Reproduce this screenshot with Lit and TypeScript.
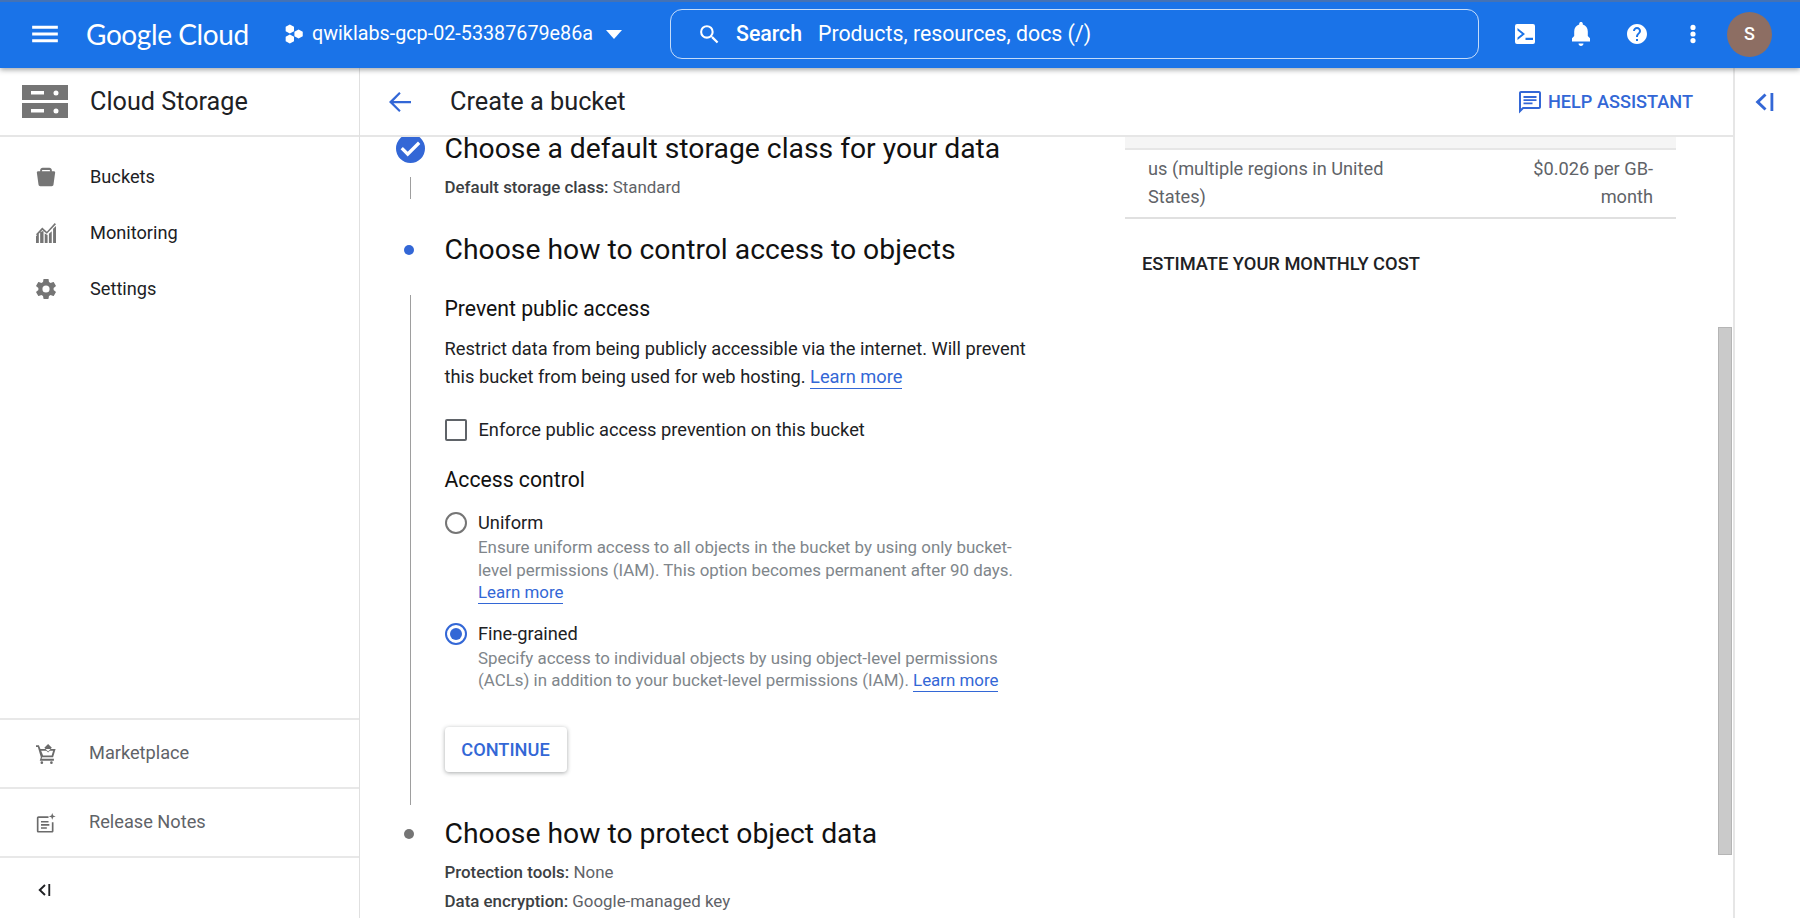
import { LitElement, css, html, svg } from "lit";
import { customElement } from "lit/decorators.js";

const icon = (size: number, body: unknown, cls = "") => html`
  <svg class=${cls} width=${size} height=${size} viewBox="0 0 24 24" fill="currentColor">${body}</svg>
`;

const menuIcon = svg`<path d="M1 5h22v2.400H1zM1 10.800h22v2.400H1zM1 16.600h22V19H1z" />`;
const searchIcon = svg`<path d="M15.500 14h-.790l-.280-.270A6.470 6.470 0 0 0 16 9.500 6.500 6.500 0 1 0 9.500 16c1.610 0 3.090-.590 4.230-1.570l.270.280v.790l5 4.990L20.490 19l-4.990-5zm-6 0C7.010 14 5 11.990 5 9.500S7.010 5 9.500 5 14 7.010 14 9.500 11.990 14 9.500 14z" />`;
const terminalIcon = svg`<path fill-rule="evenodd" d="M4 2h16a2 2 0 0 1 2 2v16a2 2 0 0 1-2 2H4a2 2 0 0 1-2-2V4a2 2 0 0 1 2-2zM4.500 8.500l4.500 3.500-4.500 3.500v2.400l7.500-5.900-7.500-5.900zM12.500 15.700v2.200H20v-2.200z" />`;
const bellIcon = svg`<path d="M12 24c1.400 0 2.500-1.100 2.500-2.500h-5C9.500 22.900 10.600 24 12 24zm9-6.500v-1.200l-2.200-2.300V9.500c0-3.400-1.900-6.200-5-7V1.700C13.800.700 13 0 12 0s-1.800.700-1.800 1.700v.8c-3.100.8-5 3.600-5 7V14L3 16.300v1.200v2h18z" />`;
const helpIcon = svg`<path d="M12 2C6.480 2 2 6.480 2 12s4.480 10 10 10 10-4.480 10-10S17.520 2 12 2zm1 17h-2v-2h2v2zm2.070-7.750-.9.920C13.450 12.900 13 13.500 13 15h-2v-.500c0-1.100.450-2.100 1.170-2.830l1.240-1.260c.370-.360.590-.860.590-1.410 0-1.100-.900-2-2-2s-2 .900-2 2H8c0-2.210 1.790-4 4-4s4 1.790 4 4c0 .880-.360 1.680-.930 2.250z" />`;
const moreIcon = svg`<path d="M12 8a2.600 2.600 0 1 0 0-5.200A2.600 2.600 0 0 0 12 8zm0 1.400a2.600 2.600 0 1 0 0 5.200 2.600 2.600 0 0 0 0-5.200zm0 6.600a2.600 2.600 0 1 0 0 5.200 2.600 2.600 0 0 0 0-5.200z" />`;
const hexIcon = svg`<path d="M7 .500l5 2.800v5.400l-5 2.800-5-2.800V3.300zM7 12.500l5 2.800v5.400l-5 2.800-5-2.800v-5.400zM17.500 6.500l5 2.800v5.400l-5 2.800-5-2.800V9.300z" />`;
const backIcon = svg`<path d="M23 11v2.200H5.500l7.200 7.300-1.500 1.500L1 12 11.200 2l1.500 1.500L5.500 11z" />`;
const chatIcon = svg`<path fill-rule="evenodd" d="M3 1h18c1.100 0 2 .900 2 2v14c0 1.100-.900 2-2 2H5.500L1 23.500V3c0-1.100.900-2 2-2zm0 2v15.500L4.800 17H21V3zM5.500 6h13v1.900h-13zM5.500 9.200h13v1.900h-13zM5.500 12.400h9v1.900h-9z" />`;
const collapseIcon = svg`<path d="M12.500 3.500l2 2L7.800 12l6.700 6.500-2 2L3.500 12zM18.500 3h2.800v18h-2.800z" />`;
const bucketIcon = svg`<path fill-rule="evenodd" d="M8 1h8c1.600 0 3 1.400 3 3v1h2.500c.800 0 1.500.700 1.500 1.500L21 21c-.100 1.100-1 2-2.200 2H5.200C4 23 3.100 22.100 3 21L1 6.500C1 5.700 1.700 5 2.500 5H5V4c0-1.600 1.400-3 3-3zm.400 2.500C7.600 3.500 7 4.100 7 4.900V5h10v-.100c0-.800-.600-1.400-1.400-1.400z" />`;
const chartIcon = svg`<path d="M0 24v-8l3.400-3.600V24zM5 24V11l3.400-1.500 .600.500V24zM10.500 24V12.500l3.400 2V24zM15.500 24V13l3.400-3V24zM20.500 24V7L24 3.500V24zM0 13.500l7.500-8 5.500 5L22.500 0 24 1.500 13 13 7.600 8.300 1.500 15z" />`;
const gearIcon = svg`<path d="M21.100 13.200c.050-.400.100-.800.100-1.200s-.050-.800-.100-1.200l2.600-2c.200-.200.300-.500.150-.750l-2.450-4.250c-.150-.250-.450-.350-.750-.250l-3.050 1.250c-.650-.500-1.300-.900-2.050-1.200L15.100.300C15.050 0 14.800 0 14.500 0h-5c-.300 0-.550.200-.600.500L8.450 3.600c-.750.300-1.450.700-2.050 1.200L3.350 3.550c-.300-.100-.600 0-.750.250L.150 8.050c-.150.250-.100.550.150.750l2.600 2c-.050.400-.100.800-.100 1.200s.050.800.100 1.200l-2.600 2c-.200.200-.300.500-.150.750l2.450 4.250c.150.250.450.350.750.250l3.050-1.250c.650.500 1.300.900 2.050 1.200l.450 3.100c.050.300.300.500.600.500h5c.300 0 .550-.200.600-.500l.450-3.100c.750-.300 1.450-.700 2.050-1.200l3.050 1.250c.300.100.600 0 .750-.250l2.450-4.250c.150-.250.100-.550-.150-.750zM12 16.300a4.300 4.300 0 1 1 0-8.600 4.300 4.300 0 0 1 0 8.600z" />`;
const cartIcon = svg`<path fill-rule="evenodd" d="M14.500 0l4.500 4.500-4.500 4.500L10 4.500zM0 1.500h3.500L5.300 6h18.200l-3 10H7.400l-.700 1.800h14.800V20H4.500l1.300-4.200L2.200 3.700H0zM6.200 8.200l2.300 5.600h10.300l1.700-5.600h-4l-2 2-2-2zM7 20.800a1.600 1.600 0 1 1 0 3.200 1.600 1.600 0 0 1 0-3.200zM18.500 20.800a1.600 1.600 0 1 1 0 3.200 1.600 1.600 0 0 1 0-3.200z" />`;
const notesIcon = svg`<path fill-rule="evenodd" d="M3 4h12v2H3v15.500h16V11h2v10.500c0 1.100-.900 2-2 2H3c-1.100 0-2-.900-2-2V6c0-1.100.900-2 2-2zM6 9.500h9v2H6zM6 13.300h10v2H6zM6 17h7v2H6zM19.500 0l1.100 3 3 1.100-3 1.100-1.100 3-1.100-3-3-1.100 3-1.100z" />`;
const checkIcon = svg`<path d="M12 0a12 12 0 1 0 0 24 12 12 0 0 0 0-24zm-2.300 18.600-5.900-6 1.900-1.900 4 4 8.500-8.500 1.900 2z" />`;

@customElement("app-root")
export class AppRoot extends LitElement {
  static override styles = css`
    :host {
      display: flex;
      flex-direction: column;
      width: 1800px;
      height: 918px;
      overflow: hidden;
      background: #fff;
      color: #202124;
      font-family: Roboto, "Liberation Sans", sans-serif;
      font-size: 18.25px;
      line-height: 28.4px;
    }

    a {
      color: #3367d6;
      text-decoration: none;
      border-bottom: 1px solid #3367d6;
      padding-bottom: 1px;
    }

    /* top bar */
    .topbar {
      position: relative;
      z-index: 2;
      flex: none;
      height: 68px;
      box-sizing: border-box;
      padding-bottom: 2px;
      border-top: 2px solid #4472b5;
      display: flex;
      align-items: center;
      background: #1a73e8;
      color: #fff;
      box-shadow: 0 2px 5px rgba(60, 64, 67, 0.45);
    }

    .menu {
      margin: 0 0 0 31px;
    }

    .logo {
      margin-left: 27px;
      width: 198px;
      font-family: Lato, sans-serif;
      font-size: 28px;
      letter-spacing: -0.4px;
      white-space: nowrap;
    }

    .hex {
      width: 20px;
      height: 20px;
    }

    .project {
      margin-left: 8px;
      width: 294px;
      font-size: 19.75px;
      white-space: nowrap;
    }

    .caret {
      width: 0;
      height: 0;
      border: 8px solid transparent;
      border-top: 9px solid #fff;
      border-bottom: 0;
    }

    .search {
      margin-left: 48px;
      width: 809px;
      height: 50px;
      box-sizing: border-box;
      border: 1px solid rgba(255, 255, 255, 0.75);
      border-radius: 12px;
      display: flex;
      align-items: center;
      padding-left: 26px;
      font-size: 21.3px;
    }

    .search b {
      margin-left: 14px;
      width: 82px;
      font-weight: 500;
    }

    .actions {
      margin-left: 34px;
      display: flex;
      align-items: center;
      gap: 32px;
    }

    .avatar {
      margin-left: 22px;
      width: 45px;
      height: 45px;
      border-radius: 50%;
      background: #8d6e63;
      display: flex;
      align-items: center;
      justify-content: center;
      font-size: 18px;
      font-weight: 500;
    }

    /* panes below the top bar */
    .body {
      flex: 1;
      min-height: 0;
      display: flex;
    }

    .sidebar {
      flex: none;
      width: 360px;
      box-sizing: border-box;
      border-right: 1px solid #e0e0e0;
      display: flex;
      flex-direction: column;
    }

    .side-title {
      flex: none;
      height: 69px;
      box-sizing: border-box;
      border-bottom: 2px solid #e6e6e6;
      display: flex;
      align-items: center;
      gap: 22px;
      padding: 1px 0 0 22px;
      font-size: 25.2px;
    }

    .side-title svg {
      margin-top: -2px;
      color: #757575;
    }

    .nav {
      flex: 1;
      padding-top: 12px;
    }

    .nav-item {
      height: 56px;
      display: flex;
      align-items: center;
      gap: 34px;
      padding-left: 36px;
      font-size: 18.2px;
    }

    .nav-item svg {
      color: #757575;
      flex: none;
    }

    .foot-item {
      height: 67px;
      border-top: 2px solid #e8e8e8;
      display: flex;
      align-items: center;
      gap: 33px;
      padding-left: 36px;
      font-size: 18.2px;
      color: #5f6368;
    }

    .foot-item svg {
      color: #6b6b6b;
      flex: none;
    }

    .collapse {
      height: 56px;
      border-top: 2px solid #e8e8e8;
      display: flex;
      align-items: center;
      padding: 4px 0 0 36px;
      color: #202124;
    }

    .main {
      flex: 1;
      min-width: 0;
      display: flex;
      flex-direction: column;
    }

    .page-head {
      flex: none;
      height: 69px;
      box-sizing: border-box;
      border-bottom: 2px solid #e6e6e6;
      display: flex;
      align-items: center;
      padding: 1px 40px 0 28px;
      font-size: 25.3px;
    }

    .page-head .back {
      color: #3367d6;
      margin-right: 38px;
    }

    .help {
      margin-left: auto;
      display: flex;
      align-items: center;
      gap: 6px;
      color: #3367d6;
      font-size: 18.15px;
      font-weight: 500;
    }

    .content {
      flex: 1;
      min-height: 0;
      display: flex;
      overflow: hidden;
    }

    .steps {
      flex: none;
      width: 765px;
    }

    /* one wizard step: marker column and text column */
    .step {
      display: grid;
      grid-template-columns: 29px 1fr;
      column-gap: 19.5px;
      padding-left: 36px;
    }

    .step.first {
      margin-top: -3px;
    }

    .step.second {
      margin-top: 34px;
    }

    .step.third {
      margin-top: 14px;
    }

    .marker {
      display: flex;
      justify-content: center;
      align-items: center;
      height: 29px;
      color: #3367d6;
    }

    .dot {
      width: 10px;
      height: 10px;
      margin-left: -3px;
      border-radius: 50%;
      background: #3367d6;
    }

    .dot.off {
      background: #757575;
    }

    h2 {
      margin: 0;
      font-size: 28.3px;
      font-weight: 400;
      line-height: 29px;
      color: #111;
    }

    .rail {
      justify-self: center;
      width: 1px;
      background: #9e9e9e;
    }

    .rail.short {
      height: 22px;
      margin-top: 14px;
    }

    .rail.long {
      height: 510px;
      margin-top: 31px;
    }

    .summary {
      font-size: 16.9px;
      color: #5f6368;
    }

    .summary.one {
      margin-top: 10px;
    }

    .summary.two {
      margin-top: 10px;
    }

    .summary b {
      font-weight: 500;
      color: #3c4043;
    }

    .form {
      margin-top: 31px;
    }

    h3 {
      margin: 0;
      font-size: 21.2px;
      font-weight: 400;
      line-height: 28px;
      color: #111;
    }

    h3.access {
      margin-top: 21px;
    }

    .desc {
      margin: 11.5px 0 0;
      width: 600px;
      color: #202124;
    }

    .check {
      margin-top: 24.5px;
      display: flex;
      align-items: center;
      gap: 12px;
      color: #202124;
    }

    .box {
      width: 18px;
      height: 18px;
      border: 2px solid #5f6368;
      border-radius: 2px;
    }

    .radio {
      display: grid;
      grid-template-columns: 22px 1fr;
      column-gap: 11.5px;
      margin-top: 16px;
    }

    .radio.top {
      margin-top: 15px;
    }

    .ring {
      align-self: center;
      width: 22px;
      height: 22px;
      box-sizing: border-box;
      border: 2px solid #757575;
      border-radius: 50%;
      display: flex;
      align-items: center;
      justify-content: center;
    }

    .ring.on {
      border-color: #3367d6;
    }

    .ring.on::after {
      content: "";
      width: 12px;
      height: 12px;
      border-radius: 50%;
      background: #3367d6;
    }

    .hint {
      grid-column: 2;
      margin-top: -1px;
      font-size: 16.9px;
      line-height: 22.5px;
      color: #80868b;
    }

    .continue {
      margin-top: 35px;
      width: 122px;
      height: 45px;
      border-radius: 4px;
      background: #fff;
      color: #3367d6;
      font-size: 18.2px;
      font-weight: 500;
      line-height: 45px;
      text-align: center;
      box-shadow: 0 1px 4px rgba(60, 64, 67, 0.45);
    }

    /* pricing column */
    .pricing {
      flex: none;
      width: 551px;
      color: #5f6368;
    }

    .band {
      height: 11px;
      background: #f5f5f5;
      border-bottom: 2px solid #e6e6e6;
    }

    .price-row {
      display: flex;
      justify-content: space-between;
      padding: 5px 23px;
      border-bottom: 2px solid #e0e0e0;
      font-size: 18.2px;
    }

    .price-row span:first-child {
      width: 270px;
    }

    .price-row span:last-child {
      width: 125px;
      text-align: right;
    }

    .estimate {
      margin: 31px 0 0 17px;
      font-size: 18.3px;
      font-weight: 500;
      color: #202124;
    }

    .scroll {
      flex: none;
      box-sizing: border-box;
      width: 14px;
      height: 528px;
      margin: 190px 0 0 42px;
      background: #cacaca;
      border: 1px solid #b5b5b5;
    }

    .rightbar {
      flex: none;
      width: 67px;
      box-sizing: border-box;
      border-left: 2px solid #e6e6e6;
      padding: 22px 0 0 16.5px;
      color: #3367d6;
    }
  `;

  override render() {
    return html`
      <header class="topbar">
        ${icon(28, menuIcon, "menu")}
        <div class="logo">Google Cloud</div>
        <svg class="hex" viewBox="0 0 24 24" fill="currentColor">${hexIcon}</svg>
        <div class="project">qwiklabs-gcp-02-53387679e86a</div>
        <div class="caret"></div>
        <div class="search">
          ${icon(25, searchIcon)}
          <b>Search</b>
          <span>Products, resources, docs (/)</span>
        </div>
        <div class="actions">
          ${icon(24, terminalIcon)} ${icon(24, bellIcon)} ${icon(24, helpIcon)}
          ${icon(24, moreIcon)}
        </div>
        <div class="avatar">S</div>
      </header>
      <div class="body">
        <aside class="sidebar">
          <div class="side-title">
            <svg width="46" height="33" viewBox="0 0 46 33" fill="currentColor">
              <path
                fill-rule="evenodd"
                d="M0 0h46v15H0zM9 6v3.500h13V6zM34 5.500a2.500 2.500 0 1 0 0 5 2.500 2.500 0 0 0 0-5zM0 18h46v15H0zM9 24v3.500h13V24zM34 23.500a2.500 2.500 0 1 0 0 5 2.500 2.500 0 0 0 0-5z"
              />
            </svg>
            Cloud Storage
          </div>
          <nav class="nav">
            <div class="nav-item">${icon(20, bucketIcon)} Buckets</div>
            <div class="nav-item">${icon(20, chartIcon)} Monitoring</div>
            <div class="nav-item">${icon(20, gearIcon)} Settings</div>
          </nav>
          <div class="foot-item">${icon(20, cartIcon)} Marketplace</div>
          <div class="foot-item">${icon(20, notesIcon)} Release Notes</div>
          <div class="collapse">${icon(16, collapseIcon)}</div>
        </aside>
        <main class="main">
          <div class="page-head">
            ${icon(24, backIcon, "back")}
            <span>Create a bucket</span>
            <div class="help">${icon(24, chatIcon)} HELP ASSISTANT</div>
          </div>
          <div class="content">
            <section class="steps">
              <div class="step first">
                <div class="marker">${icon(29, checkIcon)}</div>
                <h2>Choose a default storage class for your data</h2>
                <div class="rail short"></div>
                <div class="summary one"><b>Default storage class:</b> Standard</div>
              </div>
              <div class="step second">
                <div class="marker"><div class="dot"></div></div>
                <h2>Choose how to control access to objects</h2>
                <div class="rail long"></div>
                <div class="form">
                  <h3>Prevent public access</h3>
                  <p class="desc">
                    Restrict data from being publicly accessible via the internet. Will prevent
                    this bucket from being used for web hosting. <a>Learn more</a>
                  </p>
                  <div class="check">
                    <div class="box"></div>
                    Enforce public access prevention on this bucket
                  </div>
                  <h3 class="access">Access control</h3>
                  <div class="radio top">
                    <div class="ring"></div>
                    <div>Uniform</div>
                    <div class="hint">
                      Ensure uniform access to all objects in the bucket by using only bucket-<br />
                      level permissions (IAM). This option becomes permanent after 90 days.<br />
                      <a>Learn more</a>
                    </div>
                  </div>
                  <div class="radio">
                    <div class="ring on"></div>
                    <div>Fine-grained</div>
                    <div class="hint">
                      Specify access to individual objects by using object-level permissions<br />
                      (ACLs) in addition to your bucket-level permissions (IAM). <a>Learn more</a>
                    </div>
                  </div>
                  <div class="continue">CONTINUE</div>
                </div>
              </div>
              <div class="step third">
                <div class="marker"><div class="dot off"></div></div>
                <h2>Choose how to protect object data</h2>
                <div></div>
                <div class="summary two">
                  <div><b>Protection tools:</b> None</div>
                  <div><b>Data encryption:</b> Google-managed key</div>
                </div>
              </div>
            </section>
            <section class="pricing">
              <div class="band"></div>
              <div class="price-row">
                <span>us (multiple regions in United States)</span>
                <span>$0.026 per GB-month</span>
              </div>
              <div class="estimate">ESTIMATE YOUR MONTHLY COST</div>
            </section>
            <div class="scroll"></div>
          </div>
        </main>
        <div class="rightbar">${icon(24, collapseIcon)}</div>
      </div>
    `;
  }
}
